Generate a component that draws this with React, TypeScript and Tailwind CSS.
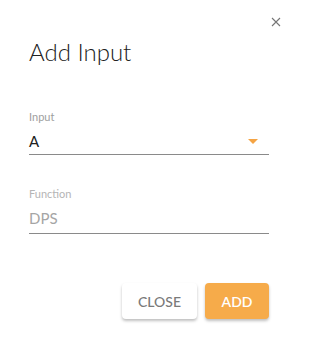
import { useState } from 'react';

const AddInputDialog = () => {
  const [input] = useState('A');

  return (
    <div className="w-[296px] h-[348px] bg-white relative font-['Lato',sans-serif]">
      {/* close button */}
      <button className="absolute right-[15px] top-[17px] w-[10px] h-[10px] text-[#757575]">
        <svg viewBox="0 0 10 10" width="10" height="10" stroke="currentColor" strokeWidth="1.1">
          <path d="M1 1 L9 9 M9 1 L1 9" />
        </svg>
      </button>

      <div className="px-[29px] pt-[36px]">
        <h2 className="text-[24px] leading-[32px] font-light text-[#212121]">Add Input</h2>

        {/* Input select */}
        <div className="mt-[42px] w-[240px]">
          <label className="block text-[11px] leading-[14px] text-[#9e9e9e]">Input</label>
          <div className="flex items-center justify-between h-[27px] mt-[4px] border-b border-[#8a8a8a]">
            <span className="text-[15px] text-[#212121]">{input}</span>
            <svg width="10" height="6" viewBox="0 0 10 6" className="mr-[11px] mt-[2px]">
              <path d="M0 0 H10 L5 5 Z" fill="#f5a443" />
            </svg>
          </div>
        </div>

        {/* Function field (disabled) */}
        <div className="mt-[32px] w-[240px]">
          <label className="block text-[11px] leading-[14px] text-[#b5b5b5]">Function</label>
          <div className="flex items-center h-[31px] mt-[2px] border-b border-[#8a8a8a]">
            <span className="text-[15px] text-[#a5a5a5]">DPS</span>
          </div>
        </div>

        {/* actions */}
        <div className="flex justify-end gap-[8px] mt-[49px] w-[240px]">
          <button className="h-[36px] w-[75px] rounded-[4px] bg-white text-[#7a7a7a] text-[14px] font-medium shadow-[0_2px_3px_rgba(0,0,0,0.25)]">
            CLOSE
          </button>
          <button className="h-[36px] w-[64px] rounded-[4px] bg-[#f6ab4a] text-white text-[14px] font-semibold shadow-[0_2px_3px_rgba(0,0,0,0.25)]">
            ADD
          </button>
        </div>
      </div>
    </div>
  );
};

export default AddInputDialog;
